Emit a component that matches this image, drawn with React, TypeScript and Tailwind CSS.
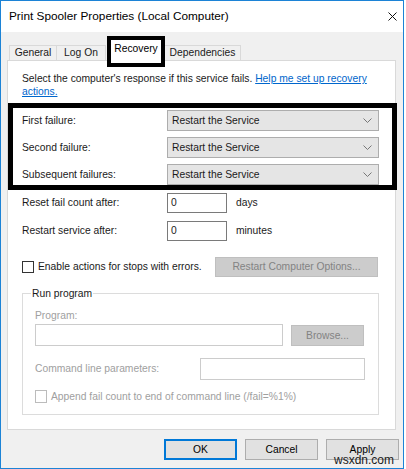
import React from 'react';

const Chevron = () => (
  <svg width="9" height="5" viewBox="0 0 9 5" className="mr-[6px]">
    <path d="M0.5 0.5 L4.5 4.5 L8.5 0.5" fill="none" stroke="#777777" strokeWidth="1" />
  </svg>
);

const Dropdown = ({ value }: { value: string }) => (
  <div className="w-[212px] h-[21px] bg-[#e5e5e5] border border-[#adadad] flex items-center justify-between pl-[4px]">
    <span>{value}</span>
    <Chevron />
  </div>
);

const failures = ['First failure:', 'Second failure:', 'Subsequent failures:'];

const App = () => {
  return (
    <div className="w-[406px] h-[469px] bg-white relative font-['Liberation_Sans',Arial,sans-serif] text-[10.3px] text-[#1a1a1a]">
      <div className="w-[404px] h-[469px] border border-[#1c83d6] flex flex-col bg-[#f0f0f0]">
        {/* title bar */}
        <div className="h-[31px] bg-white flex items-center justify-between pl-[8px] pr-[6px]">
          <span className="text-[11.8px] text-black">Print Spooler Properties (Local Computer)</span>
          <svg width="9" height="9" viewBox="0 0 9 9">
            <path d="M0.5 0.5 L8.5 8.5 M8.5 0.5 L0.5 8.5" stroke="#111" strokeWidth="1" />
          </svg>
        </div>

        {/* tabs */}
        <div className="h-[28px] flex items-end pl-[8px]">
          <div className="w-[48px] h-[15px] border border-b-0 border-[#d9d9d9] text-center leading-[14px]">General</div>
          <div className="w-[49px] h-[15px] border border-b-0 border-l-0 border-[#d9d9d9] text-center leading-[14px]">Log On</div>
          <div className="relative z-10 w-[58px] h-[31px] ml-[1px] mb-[-7px] border-[4px] border-black bg-white text-center leading-[14px] pt-[2px] text-black">
            Recovery
          </div>
          <div className="w-[76px] h-[15px] border border-b-0 border-l-0 border-[#d9d9d9] text-center leading-[14px]">Dependencies</div>
        </div>

        {/* panel */}
        <div className="ml-[6px] w-[389px] h-[370px] bg-white border border-[#d9d9d9] flex flex-col">
          <p className="pt-[11px] pl-[14px] leading-[13px]">
            Select the computer's response if this service fails.{' '}
            <a className="text-[#0066cc] underline">
              Help me set up recovery
              <br />
              actions.
            </a>
          </p>

          <div className="mt-[5px] w-[389px] h-[87px] border-[5px] border-black pt-[2px] pl-[9px] flex flex-col gap-[6px] shrink-0">
            {failures.map((label) => (
              <div key={label} className="flex items-center">
                <span className="w-[145px]">{label}</span>
                <Dropdown value="Restart the Service" />
              </div>
            ))}
          </div>

          <div className="mt-[3px] pl-[14px] flex items-center h-[20px]">
            <span className="w-[145px]">Reset fail count after:</span>
            <div className="w-[60px] h-[20px] border border-[#7a7a7a] pl-[3px] leading-[18px]">0</div>
            <span className="ml-[9px]">days</span>
          </div>
          <div className="mt-[8px] pl-[14px] flex items-center h-[20px]">
            <span className="w-[145px]">Restart service after:</span>
            <div className="w-[60px] h-[20px] border border-[#7a7a7a] pl-[3px] leading-[18px]">0</div>
            <span className="ml-[9px]">minutes</span>
          </div>

          <div className="mt-[16px] pl-[14px] flex items-center h-[20px]">
            <div className="w-[193px] flex items-center">
              <div className="w-[12px] h-[12px] border border-[#333333] bg-white" />
              <span className="ml-[4px]">Enable actions for stops with errors.</span>
            </div>
            <div className="w-[163px] h-[20px] bg-[#cccccc] border border-[#bfbfbf] text-[#838383] flex items-center justify-center">
              Restart Computer Options...
            </div>
          </div>

          {/* run program group */}
          <div className="mt-[16px] ml-[14px] w-[357px] h-[122px] border border-[#dcdcdc] flex flex-col">
            <span className="-mt-[7px] ml-[8px] w-fit px-[1px] bg-white leading-[13px]">Run program</span>
            <span className="mt-[9px] ml-[12px] leading-[13px] text-[#a0a0a0]">Program:</span>
            <div className="mt-[2px] ml-[12px] flex items-start">
              <div className="w-[248px] h-[22px] border border-[#cccccc]" />
              <div className="mt-[1px] ml-[8px] w-[73px] h-[21px] bg-[#cccccc] border border-[#bfbfbf] text-[#838383] flex items-center justify-center">
                Browse...
              </div>
            </div>
            <div className="mt-[12px] ml-[12px] flex items-center">
              <span className="w-[165px] text-[#a0a0a0]">Command line parameters:</span>
              <div className="w-[165px] h-[22px] border border-[#cccccc]" />
            </div>
            <div className="mt-[10px] ml-[12px] flex items-center h-[13px]">
              <div className="w-[12px] h-[13px] border border-[#bcbcbc]" />
              <span className="ml-[4px] text-[#a0a0a0]">Append fail count to end of command line (/fail=%1%)</span>
            </div>
          </div>
        </div>

        {/* buttons */}
        <div className="mt-[9px] h-[21px] flex justify-end gap-[8px] pr-[4px]">
          <button className="w-[73px] h-[21px] border-2 border-[#0078d7] bg-[#e1e1e1] text-black">OK</button>
          <button className="w-[73px] h-[21px] border border-[#adadad] bg-[#e1e1e1] text-black">Cancel</button>
          <button className="w-[73px] h-[21px] border border-[#adadad] bg-[#e1e1e1] text-black">Apply</button>
        </div>
      </div>

      <span className="absolute left-[334px] top-[451px] text-[12px] text-[#1a1a1a]">wsxdn.com</span>
    </div>
  );
};

export default App;
